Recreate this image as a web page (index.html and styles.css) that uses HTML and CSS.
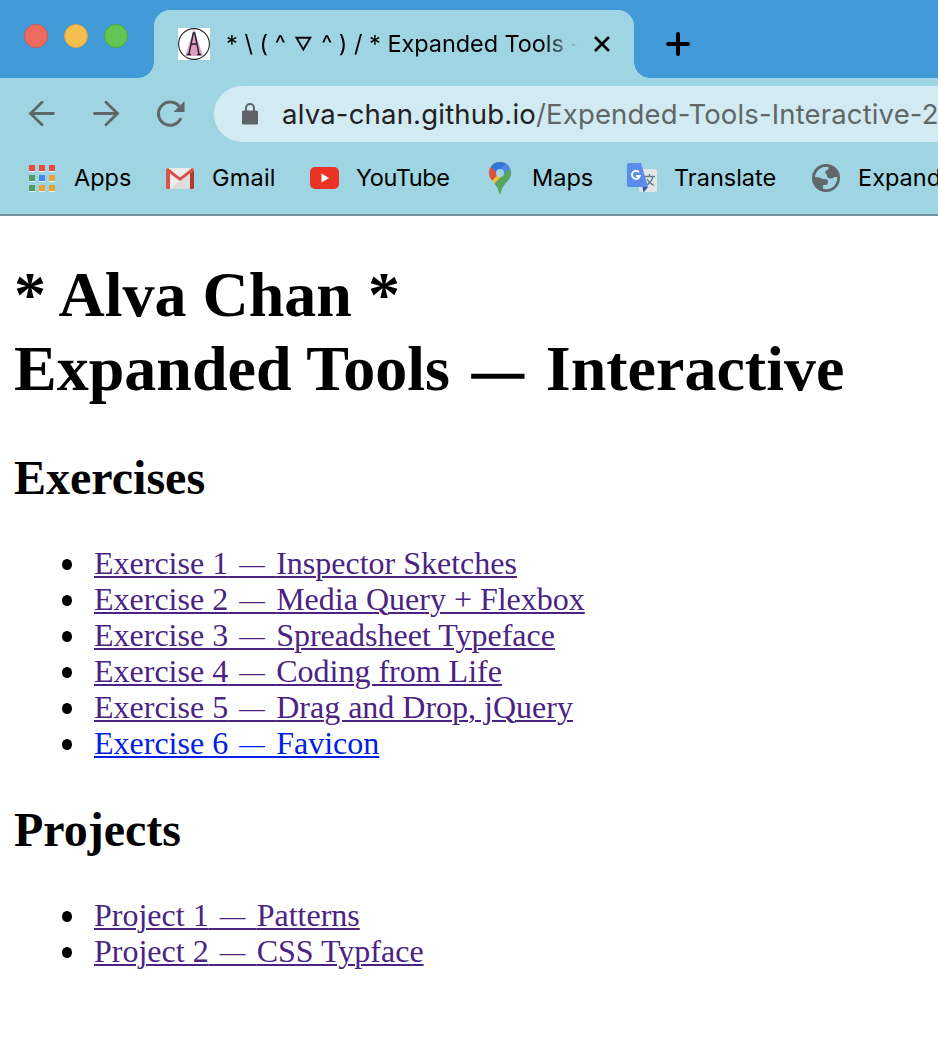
FILE: index.html
```html
<!DOCTYPE html>
<html lang="en">
<head>
<meta charset="utf-8">
<title>Expanded Tools</title>
<link rel="stylesheet" href="styles.css">
</head>
<body>
<header class="browser">
  <div class="tabstrip">
    <div class="lights"><i class="light red"></i><i class="light yellow"></i><i class="light green"></i></div>
    <div class="tab">
      <svg class="favicon" viewBox="0 0 32 32" width="32" height="32"><rect width="32" height="32" fill="#fff"/><path d="M16 1 25 28H7Z" fill="#dfa0c8"/><circle cx="16" cy="16" r="15.4" fill="none" stroke="#222" stroke-width="1.1"/><path d="M11 26 15.300 5h1.400L21 26M12.500 16h7M9 26.500h4M19 26.500h4" fill="none" stroke="#222" stroke-width="1.400"/></svg>
      <div class="title"><span class="face">* \ ( ^ <span class="nabla">▽</span> ^ ) / *</span> <span class="name">Expanded Tools -</span></div>
      <svg class="close" viewBox="0 0 18 18" width="18" height="18"><path d="M2 2 16 16M16 2 2 16" stroke="#000" stroke-width="2.700"/></svg>
    </div>
    <svg class="plus" viewBox="0 0 24 24" width="24" height="24"><path d="M12 2v20M2 12h20" stroke="#000" stroke-width="4" stroke-linecap="round"/></svg>
  </div>
  <div class="toolbar">
    <svg class="nav" viewBox="0 0 28 28" width="28" height="28"><path d="M25.500 13.500H2.500M14 2.200 2.500 13.500 14 24.800" /></svg>
    <svg class="nav forward" viewBox="0 0 28 28" width="28" height="28"><path d="M2.500 13.500H25.500M14 2.200 25.500 13.500 14 24.800"/></svg>
    <svg class="reload" viewBox="0 0 28 28" width="28" height="28"><path d="M23.800 18.200A11.600 11.600 0 1 1 22.200 6.500" fill="none" stroke="#5f6769" stroke-width="3"/><path d="M27.500 1V12H16.500Z" fill="#5f6769"/></svg>
    <div class="omnibox">
      <svg class="lock" viewBox="0 0 16 22" width="16" height="22"><rect y="7.500" width="16" height="14" rx="1.500" fill="#5f6368"/><path d="M4 8.500V5a4 4 0 0 1 8 0v3.500" fill="none" stroke="#5f6368" stroke-width="2"/></svg>
      <div class="url"><span class="host">alva-chan.github.io</span><span class="path">/Expended-Tools-Interactive-2</span></div>
    </div>
  </div>
  <nav class="bookmarks">
    <a class="bm apps"><svg viewBox="0 0 26 27" width="26" height="27"><path d="M0 6h6v1H0zM10 6h6v1h-6zM20 6h6v1h-6zM0 16h6v1H0zM10 16h6v1h-6zM20 16h6v1h-6zM0 26h6v1H0zM10 26h6v1h-6zM20 26h6v1h-6z" fill="#e6f4f2"/><path d="M0 0h6v6H0zM10 0h6v6h-6zM20 0h6v6h-6z" fill="#e54b3c"/><path d="M0 10h6v6H0zM0 20h6v6H0z" fill="#549b61"/><path d="M10 10h6v6h-6z" fill="#4288f0"/><path d="M20 10h6v6h-6zM10 20h6v6h-6zM20 20h6v6h-6z" fill="#e9a234"/></svg><span>Apps</span></a>
    <a class="bm gmail"><svg viewBox="0 0 28 21" width="28" height="21"><rect width="28" height="21" rx="1.500" fill="#ececec"/><path d="M4 21 14 13 24 21Z" fill="#dcdcdc"/><path d="M14 13 24 5v16Z" fill="#dedede"/><path d="M0 2v17.500Q0 21 1.500 21H4V5.500L0 2" fill="#d9564a"/><path d="M28 2v17.500q0 1.500-1.500 1.500H24V5.500L28 2" fill="#b23a2e"/><path d="M0 2Q0 0 2 0L14 9.500 26 0q2 0 2 2.300L14 13 0 2.500Z" fill="#d45042"/></svg><span>Gmail</span></a>
    <a class="bm youtube"><svg viewBox="0 0 29 22" width="29" height="22"><rect width="29" height="22" rx="5" fill="#ea3323"/><path d="M11.500 6.500V15.500L19 11Z" fill="#fff"/></svg><span>YouTube</span></a>
    <a class="bm maps"><svg viewBox="0 0 22 32" width="22" height="32"><defs><clipPath id="pin"><path d="M11 0A11 11 0 0 1 22 11C22 19 13 21 11.800 31Q11 32.500 10.200 31C9 21 0 19 0 11A11 11 0 0 1 11 0Z"/></clipPath></defs><g clip-path="url(#pin)"><path d="M0 0h22v32H0z" fill="#58a55c"/><path d="M0 0H22V5L11 17 3 24H0Z" fill="#f2bf42"/><path d="M0 0H8L11 11 2.500 19 0 17Z" fill="#d9513f"/><path d="M2 0H22V5L11 13 1.500 5Z" fill="#3174dc"/><path d="M18 0H22V12L15 15 9.500 10Z" fill="#5086ec"/><path d="M22 5 4 23 10 32H22Z" fill="#58a55c"/></g><circle cx="11" cy="11" r="4" fill="#9fd5e2"/></svg><span>Maps</span></a>
    <a class="bm translate"><svg viewBox="0 0 30 30" width="30" height="30"><rect x="12" y="6" width="18" height="23" rx="2" fill="#e2e5e6"/><path d="M18 13.500H28M22.500 11v2.500M26 13.500Q24.500 20 18.500 22.500M20 16Q22 20 27 22.500" fill="none" stroke="#62818b" stroke-width="1.300"/><path d="M15.500 24H21L16.500 29.500Z" fill="#3c54b0"/><path d="M2 0H14L21 24H2Q0 24 0 22V2Q0 0 2 0Z" fill="#5a8cec"/><path d="M12 9.200A4 4 0 1 0 12.800 13H9" fill="none" stroke="#fff" stroke-width="1.900"/></svg><span>Translate</span></a>
    <a class="bm globe"><svg viewBox="0 0 28 28" width="28" height="28"><circle cx="14" cy="14" r="14" fill="#5f6769"/><path d="M3 13A11.200 11.200 0 0 1 16.500 3Q17 6 14 6.500 12.500 7.500 13.500 9.500 15 10 15 12 15.500 14.500 18.500 14.500 21 14.500 22.500 13H25.200A11.200 11.200 0 0 1 11 24.800V21H14Q16 20.500 16 18 16 15 13 15H10.500Q8 13 3 13Z" fill="#9fd5e2"/></svg><span>Expanded</span></a>
  </nav>
</header>
<main class="page">
  <h1>* Alva Chan *<br>Expanded Tools<span class="dash"> — </span>Interactive</h1>
  <h2>Exercises</h2>
  <ul>
    <li><a class="link">Exercise 1<span class="dash"> — </span>Inspector Sketches</a></li>
    <li><a class="link">Exercise 2<span class="dash"> — </span>Media Query + Flexbox</a></li>
    <li><a class="link">Exercise 3<span class="dash"> — </span>Spreadsheet Typeface</a></li>
    <li><a class="link">Exercise 4<span class="dash"> — </span>Coding from Life</a></li>
    <li><a class="link">Exercise 5<span class="dash"> — </span>Drag and Drop, jQuery</a></li>
    <li><a class="link fresh">Exercise 6<span class="dash"> — </span>Favicon</a></li>
  </ul>
  <h2>Projects</h2>
  <ul>
    <li><a class="link">Project 1<span class="dash"> — </span>Patterns</a></li>
    <li><a class="link">Project 2<span class="dash"> — </span>CSS Typface</a></li>
  </ul>
</main>
</body>
</html>
```
FILE: styles.css
```css
* { box-sizing: border-box; }
body { margin: 0; background: #fff; color: #000; overflow: hidden; height: 1050px; }
svg { display: block; flex: none; overflow: visible; }

.browser {
  height: 216px;
  background: #9fd5e2;
  border-bottom: 2px solid #7294a0;
  font-family: Inter, "Liberation Sans", sans-serif;
  overflow: hidden;
  white-space: nowrap;
}
.tabstrip { display: flex; height: 78px; background: #439ad8; }
.lights { display: flex; gap: 16px; padding: 24px 0 0 24px; width: 154px; flex: none; }
.light { width: 24px; height: 24px; border-radius: 50%; border: 1px solid; }
.red { background: #ed6b5f; border-color: #d2574c; }
.yellow { background: #f5bf4f; border-color: #d6a243; }
.green { background: #62c655; border-color: #4ba83f; }

.tab {
  position: relative;
  display: flex;
  align-items: center;
  flex: none;
  width: 480px;
  height: 68px;
  margin-top: 10px;
  padding-left: 24px;
  background: #9fd5e2;
  border-radius: 16px 16px 0 0;
}
.tab::before, .tab::after {
  content: "";
  position: absolute;
  bottom: 0;
  width: 16px;
  height: 16px;
}
.tab::before { left: -16px; background: radial-gradient(circle at 0 0, #439ad8 15.5px, #9fd5e2 16px); }
.tab::after { right: -16px; background: radial-gradient(circle at 100% 0, #439ad8 15.5px, #9fd5e2 16px); }
.title {
  width: 368px;
  margin-left: 16px;
  overflow: hidden;
  font-size: 23.5px;
  line-height: 32px;
  -webkit-mask-image: linear-gradient(90deg, #000 318px, transparent 352px);
  mask-image: linear-gradient(90deg, #000 318px, transparent 352px);
}
.nabla { font-size: 18px; margin: 0 2px; line-height: 1; vertical-align: 1px; -webkit-text-stroke: 0.4px #000; }
.name { letter-spacing: -0.08px; }
.close { margin-left: -1px; }
.plus { margin: 32px 0 0 32px; }

.toolbar { display: flex; align-items: center; height: 72px; padding-left: 28px; }
.nav { fill: none; stroke: #5f6769; stroke-width: 2.8; stroke-linecap: round; }
.forward { margin-left: 36px; }
.reload { margin-left: 37px; }
.omnibox {
  display: flex;
  align-items: center;
  width: 760px;
  height: 56px;
  margin-left: 29px;
  padding-left: 28px;
  flex: none;
  background: #d2ebf2;
  border-radius: 28px 0 0 28px;
}
.url { margin-left: 24px; font-size: 27.5px; }
.host { color: #202124; letter-spacing: 0.2px; }
.path { color: #5f6769; letter-spacing: 0.15px; }

.bookmarks { display: flex; height: 56px; font-size: 23.5px; }
.bm { display: flex; align-items: center; flex: none; }
.bm span { margin-top: -2px; }
.apps { width: 137px; padding-left: 29px; gap: 19px; }
.gmail { width: 144px; padding-left: 29px; gap: 18px; letter-spacing: 0.2px; }
.youtube { width: 179px; padding-left: 29px; gap: 17px; letter-spacing: -0.4px; }
.maps { width: 138px; padding-left: 29px; gap: 21px; }
.translate { width: 185px; padding-left: 29px; gap: 17px; }
.globe { padding-left: 29px; gap: 18px; }

.page { padding: 42px 14px 0; font-family: "Liberation Serif", serif; }
h1 { margin: 0; font-size: 64px; line-height: 74px; }
h2 { margin: 44px 0 39px; font-size: 48px; line-height: 56px; }
ul { margin: 0; padding: 0; list-style: none; font-size: 32px; line-height: 36px; }
li { display: flex; align-items: center; padding-left: 48px; }
li::before {
  content: "";
  flex: none;
  width: 10px;
  height: 11px;
  margin: 3px 22px 0 0;
  border-radius: 50%;
  background: #000;
}
ul + h2 { margin-top: 41px; }
.link { color: #4a2383; text-decoration: underline; text-decoration-thickness: 2px; text-underline-offset: 2px; }
.fresh { color: #0020e6; }
.dash { font-size: 0.8em; word-spacing: 0.1875em; line-height: 0; vertical-align: 0.04em; }
h1 .dash { -webkit-text-stroke: 1.5px #000; }
```
